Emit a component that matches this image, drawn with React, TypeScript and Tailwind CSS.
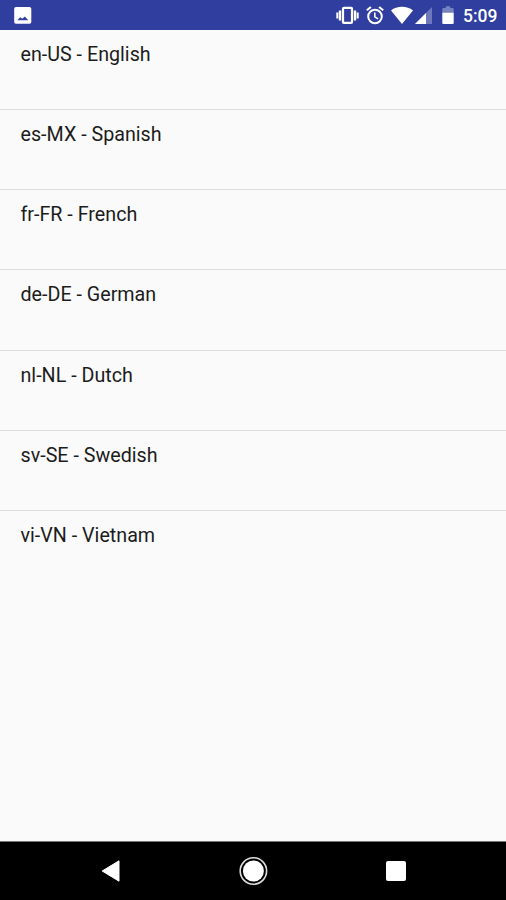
const languages = [
  { code: "en-US", name: "English" },
  { code: "es-MX", name: "Spanish" },
  { code: "fr-FR", name: "French" },
  { code: "de-DE", name: "German" },
  { code: "nl-NL", name: "Dutch" },
  { code: "sv-SE", name: "Swedish" },
  { code: "vi-VN", name: "Vietnam" },
];

const StatusBar = () => (
  <header className="flex h-[30px] shrink-0 items-center bg-[#303f9f] pl-[14px] pr-[9px] text-white">
    <svg width="18" height="18" viewBox="0 0 18 18" fill="currentColor">
      <path
        fillRule="evenodd"
        d="M2 .9h13.5a1.8 1.8 0 0 1 1.8 1.8V16a1.8 1.8 0 0 1-1.8 1.8H2A1.8 1.8 0 0 1 .2 16V2.7A1.8 1.8 0 0 1 2 .9ZM3.4 14.2h10.8l-3.3-3.8-2.6 2.4-2.2-1.6Z"
      />
    </svg>
    <div className="ml-auto flex items-center">
      <svg width="23" height="20" viewBox="0 0 23 20">
        <path
          fill="currentColor"
          d="M.3 7.5h2v6h-2ZM2.8 5.5h2.4v10H2.8ZM17.8 5.5h2.4v10h-2.4ZM20.7 7.5h2v6h-2Z"
        />
        <rect x="7" y="2.8" width="9" height="15" rx=".8" fill="none" stroke="currentColor" strokeWidth="2.2" />
      </svg>
      <svg className="ml-[7px]" width="18" height="20" viewBox="0 0 18 20" fill="none" stroke="currentColor">
        <circle cx="9" cy="11.5" r="6.8" strokeWidth="2" />
        <path strokeWidth="2" d="M.8 5.3 4.9 1.9M17.2 5.3l-4.1-3.4" />
        <path strokeWidth="1.6" d="M8.8 7.5v4.4l3.3 2" />
      </svg>
      <svg className="ml-[7px]" width="22" height="18" viewBox="0 0 22 18" fill="currentColor">
        <path d="M0 4.4C3 2 6.8.8 11 .8s8 1.2 11 3.6L11 18Z" />
      </svg>
      <svg className="ml-[2px]" width="18" height="18" viewBox="0 0 18 18" fill="currentColor">
        <path opacity=".3" d="M17 .9v17.1H0Z" />
        <path d="M11 7V18H0Z" />
      </svg>
      <svg className="ml-[9px]" width="12" height="18" viewBox="0 0 12 18" fill="currentColor">
        <path opacity=".35" d="M3.8 .3h4.4v1.8h2.5a1 1 0 0 1 1 1V7H.3V3.1a1 1 0 0 1 1-1h2.5Z" />
        <path d="M.3 6.8h11.4V17a1 1 0 0 1-1 1H1.3a1 1 0 0 1-1-1Z" />
      </svg>
      <span className="ml-[9px] w-[34px] whitespace-nowrap pt-[3px] text-[17.5px] font-medium leading-none">
        5:09
      </span>
    </div>
  </header>
);

const NavigationBar = () => (
  <nav className="grid h-[59px] shrink-0 grid-cols-[143px_142px_143px] items-center justify-center border-t border-[#777] bg-black text-white">
    <svg className="justify-self-center" width="20" height="24" viewBox="0 0 20 24" fill="currentColor">
      <path d="M1.2 12 18 1.8v20.4Z" stroke="currentColor" strokeLinejoin="round" />
    </svg>
    <svg className="justify-self-center" width="30" height="30" viewBox="0 0 30 30">
      <circle cx="15.4" cy="15" r="13.2" fill="none" stroke="#ddd" strokeWidth="1.6" />
      <circle cx="15.4" cy="15" r="10.5" fill="currentColor" />
    </svg>
    <div className="h-5 w-5 justify-self-center rounded-[2px] bg-white" />
  </nav>
);

const App = () => {
  return (
    <div className="flex h-[900px] w-[506px] flex-col bg-[#fafafa] font-['Roboto',sans-serif]">
      <StatusBar />
      <ul className="flex-1 divide-y divide-[#dcdcdc]">
        {languages.map(({ code, name }) => (
          <li
            key={code}
            className="h-[80.15px] pl-[20.5px] pt-[10px] text-[19.7px] leading-[30px] text-[#1c1c1c]"
          >
            {code} - {name}
          </li>
        ))}
      </ul>
      <NavigationBar />
    </div>
  );
};

export default App;
